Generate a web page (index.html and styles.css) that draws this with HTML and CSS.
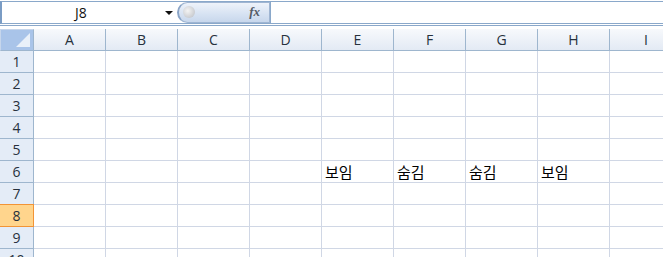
FILE: index.html
```html
<!DOCTYPE html>
<html lang="ko">
<head>
    <meta charset="UTF-8">
    <title>Sheet1</title>
    <link rel="stylesheet" href="styles.css">
</head>
<body>
<div class="formula-bar">
    <div class="name-box">
        <span class="name-text">J8</span>
        <span class="name-arrow"></span>
    </div>
    <div class="fx-box">
        <span class="fx-knob"></span>
        <span class="fx-label">fx</span>
    </div>
    <div class="formula-input"></div>
</div>
<div class="bar-rule"></div>

<div class="sheet">
    <div class="corner"><span class="corner-tri"></span></div>
    <div class="col-head">A</div>
    <div class="col-head">B</div>
    <div class="col-head">C</div>
    <div class="col-head">D</div>
    <div class="col-head">E</div>
    <div class="col-head">F</div>
    <div class="col-head">G</div>
    <div class="col-head">H</div>
    <div class="col-head last">I</div>
</div>

<script>
    // filas de la hoja, solo la fila 6 tiene datos
    const sheet = document.querySelector('.sheet');
    const datos = { 6: ['', '', '', '', '보임', '숨김', '숨김', '보임', ''] };
    for (let r = 1; r <= 10; r++) {
        const head = document.createElement('div');
        head.className = 'row-head' + (r === 8 ? ' active' : '');
        head.textContent = r;
        sheet.appendChild(head);
        for (let c = 0; c < 9; c++) {
            const cell = document.createElement('div');
            cell.className = 'cell' + (c === 8 ? ' last' : '');
            cell.textContent = datos[r] ? datos[r][c] : '';
            sheet.appendChild(cell);
        }
    }
</script>
</body>
</html>
```

FILE: styles.css
```css
* {
    box-sizing: border-box;
}

body {
    margin: 0;
    background: #fff;
    font-family: "Open Sans", "Noto Sans", sans-serif;
    overflow: hidden;
}

.formula-bar {
    display: flex;
    height: 23px;
    margin-top: 1px;
    border-top: 1px solid #8aa8ca;
    border-bottom: 1px solid #8aa8ca;
    border-left: 2px solid #7a9cc4;
}

.name-box {
    width: 175px;
    display: flex;
    align-items: center;
    position: relative;
}

.name-text {
    width: 158px;
    text-align: center;
    font-size: 14px;
    color: #111;
}

.name-arrow {
    position: absolute;
    left: 163px;
    top: 9px;
    border-left: 4px solid transparent;
    border-right: 4px solid transparent;
    border-top: 4px solid #111;
}

.fx-box {
    width: 93px;
    height: 21px;
    position: relative;
    border-radius: 11px 0 0 11px;
    border: 1px solid #9fb5d2;
    border-left: 2px solid #8aa4c6;
    background: linear-gradient(#eef3fa, #d6e2f2 60%, #c8d7ec);
}

.fx-knob {
    position: absolute;
    left: 4px;
    top: 3px;
    width: 12px;
    height: 12px;
    border-radius: 50%;
    background: radial-gradient(circle at 40% 40%, #f4f4f4, #b9bcc2);
}

.fx-label {
    position: absolute;
    right: 9px;
    top: 1px;
    font-family: "Liberation Serif", serif;
    font-style: italic;
    font-weight: bold;
    font-size: 13px;
    color: #555b66;
}

.formula-input {
    flex: 1;
    border-left: 1px solid #8aa8ca;
}

.bar-rule {
    height: 4px;
    margin-top: 1px;
    border-top: 1px solid #8aa8ca;
}

.sheet {
    display: grid;
    grid-template-columns: 34px repeat(8, 72px) 72px;
    grid-auto-rows: 22px;
}

.corner {
    position: relative;
    background: #a9c4e9;
    border: 1px solid #c6d6ec;
    border-right: 1px solid #9eb6ce;
    border-bottom: 1px solid #9eb6ce;
}

.corner-tri {
    position: absolute;
    right: 3px;
    bottom: 3px;
    border-left: 14px solid transparent;
    border-bottom: 14px solid #e9f0f9;
}

.col-head {
    background: linear-gradient(#f7f9fc, #e3eaf4);
    border-right: 1px solid #9eb6ce;
    border-bottom: 1px solid #9eb6ce;
    text-align: center;
    font-size: 14px;
    line-height: 21px;
    color: #27313d;
}

.row-head {
    background: #e4ecf7;
    border-right: 1px solid #9eb6ce;
    border-bottom: 1px solid #9eb6ce;
    text-align: center;
    font-size: 14px;
    line-height: 21px;
    color: #27313d;
}

.row-head.active {
    background: #ffd58d;
    border: 1px solid #f29436;
    border-left: none;
    margin-top: -1px;
    height: 23px;
    line-height: 21px;
}

.cell {
    border-right: 1px solid #d0d7e5;
    border-bottom: 1px solid #d0d7e5;
    font-family: "Noto Sans CJK KR", sans-serif;
    font-size: 15px;
    line-height: 21px;
    padding-left: 3px;
    color: #000;
    white-space: nowrap;
}

.last {
    border-right: none;
}
```
